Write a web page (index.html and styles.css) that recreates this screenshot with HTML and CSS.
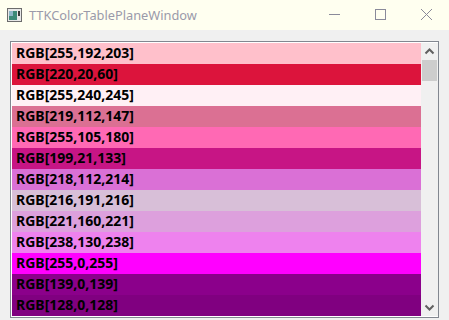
FILE: index.html
```html
<!DOCTYPE html>
<html>
<head>
  <meta charset=utf-8>
  <title>TTKColorTablePlaneWindow</title>
  <link rel="stylesheet" href="styles.css">
</head>
<body>

<div class=window>
  <div class=titlebar>
    <svg class=appIcon width=15 height=14 viewBox="0 0 15 14">
      <rect x=0.5 y=0.5 width=14 height=13 fill="#e8e8e8" stroke="#6c6c6c"/>
      <rect x=2 y=3 width=8 height=9 fill="#3d8a78"/>
      <rect x=2 y=3 width=4 height=5 fill="#8fb7c9"/>
      <rect x=11 y=3 width=2 height=5 fill="#3a3a3a"/>
    </svg>
    <span class=caption>TTKColorTablePlaneWindow</span>
    <div class=winButtons>
      <svg width=46 height=30 viewBox="0 0 46 30"><path d="M18 14.5h11" stroke="#8a8a9a" fill="none"/></svg>
      <svg width=46 height=30 viewBox="0 0 46 30"><rect x=18.5 y=9.5 width=10 height=10 stroke="#8a8a9a" fill="none"/></svg>
      <svg width=46 height=30 viewBox="0 0 46 30"><path d="M18 9l11 11M29 9l-11 11" stroke="#8a8a9a" fill="none"/></svg>
    </div>
  </div>

  <div class=client>
    <div class=listBox>
      <div class=rows id=rows></div>
      <div class=scrollBar>
        <svg class=arrow width=17 height=17 viewBox="0 0 17 17"><path d="M4.5 10.5l4-4 4 4" stroke="#606060" stroke-width=2 fill="none"/></svg>
        <div class=thumb></div>
        <div class=track></div>
        <svg class=arrow width=17 height=17 viewBox="0 0 17 17"><path d="M4.5 6.5l4 4 4-4" stroke="#606060" stroke-width=2 fill="none"/></svg>
      </div>
    </div>
  </div>
</div>

<script>
var colors = [
  [255,192,203], [220,20,60], [255,240,245], [219,112,147], [255,105,180],
  [199,21,133], [218,112,214], [216,191,216], [221,160,221], [238,130,238],
  [255,0,255], [139,0,139], [128,0,128]
];
var rows = document.getElementById('rows');
colors.forEach(function (c) {
  var row = document.createElement('div');
  row.className = 'row';
  row.style.backgroundColor = 'rgb(' + c.join(',') + ')';
  row.textContent = 'RGB[' + c.join(',') + ']';
  rows.appendChild(row);
});
</script>

</body>
</html>
```

FILE: styles.css
```css
* {
  box-sizing: border-box;
  }
html, body {
  margin: 0;
  padding: 0;
  }
body {
  width: 449px;
  height: 320px;
  overflow: hidden;
  }
.window {
  display: flex;
  flex-direction: column;
  width: 449px;
  height: 320px;
  background: #f0f0f0;
  }
.titlebar {
  display: flex;
  align-items: center;
  height: 30px;
  background: #fffff0;
  }
.appIcon {
  margin: 0 7px 0 7px;
  }
.caption {
  flex: 1;
  font: normal 12.8px "Noto Sans", sans-serif;
  color: #9a9aaa;
  }
.winButtons {
  display: flex;
  }
.winButtons svg {
  display: block;
  }
.client {
  flex: 1;
  padding: 11px 10px 7px 10px;
  display: flex;
  }
.listBox {
  flex: 1;
  display: flex;
  border: 1px solid #828790;
  background: #fff;
  padding: 1px 0 1px 1px;
  overflow: hidden;
  }
.rows {
  flex: 1;
  overflow: hidden;
  }
.row {
  height: 21px;
  line-height: 22px;
  padding-left: 4px;
  font: bold 14px "Noto Sans", sans-serif;
  color: #000;
  white-space: nowrap;
  }
.scrollBar {
  width: 17px;
  display: flex;
  flex-direction: column;
  background: #f0f0f0;
  }
.arrow {
  display: block;
  flex: none;
  }
.thumb {
  height: 21px;
  margin: 0 1px;
  background: #cdcdcd;
  }
.track {
  flex: 1;
  }
```
